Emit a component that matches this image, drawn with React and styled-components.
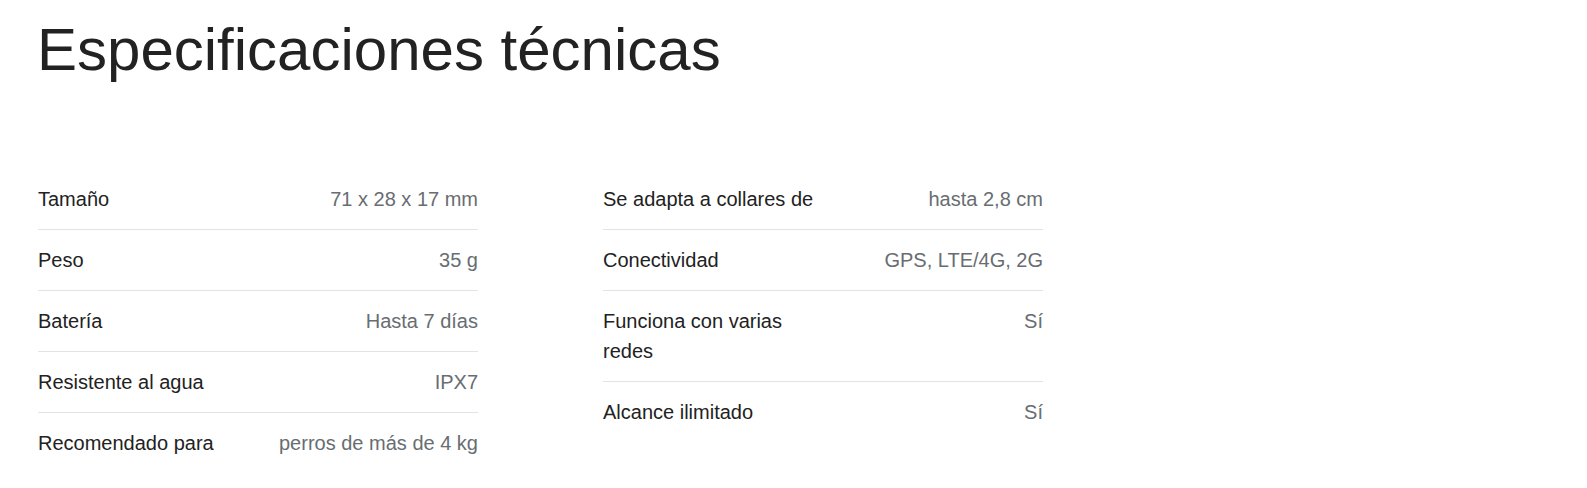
import React from 'react';
import styled, { createGlobalStyle } from 'styled-components';

const GlobalStyle = createGlobalStyle`
  html, body {
    margin: 0;
    padding: 0;
    background: #ffffff;
  }
  body {
    font-family: 'Liberation Sans', Arial, sans-serif;
    color: #222222;
  }
`;

const Page = styled.section`
  padding: 14px 37px 0 38px;
`;

const Title = styled.h1`
  margin: 0 0 83px -1px;
  font-size: 60px;
  line-height: 72px;
  font-weight: 400;
  color: #222222;
`;

const Columns = styled.div`
  display: grid;
  grid-template-columns: 440px 440px;
  column-gap: 125px;
  align-items: start;
`;

const SpecList = styled.dl`
  margin: 0;
  padding: 0;
`;

const SpecRow = styled.div`
  display: grid;
  grid-template-columns: 1fr 1fr;
  padding: 15px 0;
  border-bottom: 1px solid #e3e3e3;
  font-size: 20px;
  line-height: 30px;

  &:last-child {
    border-bottom: none;
  }
`;

const Label = styled.dt`
  margin: 0;
  color: #222222;
`;

const Value = styled.dd`
  margin: 0;
  text-align: right;
  color: #686d72;
`;

const leftSpecs = [
  ['Tamaño', '71 x 28 x 17 mm'],
  ['Peso', '35 g'],
  ['Batería', 'Hasta 7 días'],
  ['Resistente al agua', 'IPX7'],
  ['Recomendado para', 'perros de más de 4 kg'],
];

const rightSpecs = [
  ['Se adapta a collares de', 'hasta 2,8 cm'],
  ['Conectividad', 'GPS, LTE/4G, 2G'],
  ['Funciona con varias redes', 'Sí'],
  ['Alcance ilimitado', 'Sí'],
];

function Specs({ items }) {
  return (
    <SpecList>
      {items.map(([label, value], idx) => (
        <SpecRow key={`spec_${idx}`}>
          <Label>{label}</Label>
          <Value>{value}</Value>
        </SpecRow>
      ))}
    </SpecList>
  );
}

export default function App() {
  return (
    <>
      <GlobalStyle />
      <Page>
        <Title>Especificaciones técnicas</Title>
        <Columns>
          <Specs items={leftSpecs} />
          <Specs items={rightSpecs} />
        </Columns>
      </Page>
    </>
  );
}
